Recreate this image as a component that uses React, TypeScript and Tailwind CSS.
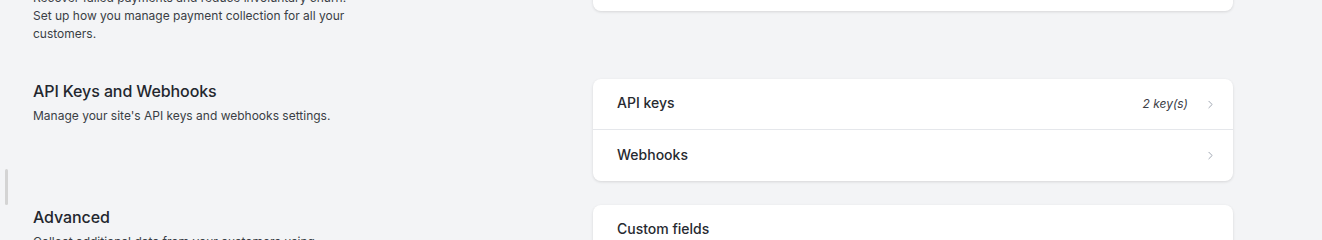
import { ChevronRight } from 'lucide-react'

type Row = { label: string; meta?: string; desc?: string }

type Section = {
  title: string
  lines: string[]
  rows: Row[]
}

const SECTIONS: Section[] = [
  {
    title: 'Payment recovery',
    lines: [
      'Recover failed payments and reduce involuntary churn.',
      'Set up how you manage payment collection for all your',
      'customers.',
    ],
    rows: [{ label: 'Dunning' }],
  },
  {
    title: 'API Keys and Webhooks',
    lines: ["Manage your site's API keys and webhooks settings."],
    rows: [{ label: 'API keys', meta: '2 key(s)' }, { label: 'Webhooks' }],
  },
  {
    title: 'Advanced',
    lines: ['Collect additional data from your customers using', 'custom fields.'],
    rows: [
      {
        label: 'Custom fields',
        desc: 'Collect additional information from customers at checkout and in the customer portal.',
      },
    ],
  },
]

function SettingsRow({ row }: { row: Row }) {
  if (row.desc) {
    return (
      <div className="flex items-start h-[100px] pl-6 pr-[16px] pt-[14px] border-t border-[#e5e7eb] first:border-t-0">
        <div className="flex-1">
          <div className="text-[14px] leading-5 font-medium text-[#272a30]">{row.label}</div>
          <div className="mt-1 text-[12px] leading-[18px] text-[#3a3e45]">{row.desc}</div>
        </div>
        <ChevronRight size={13} strokeWidth={1.75} className="self-center text-[#9ca3af]" />
      </div>
    )
  }
  return (
    <div className="flex items-center pl-6 pr-[16px] border-t border-[#e5e7eb] first:border-t-0 first:h-[50px] [&:not(:first-child)]:h-[52px]">
      <span className="flex-1 -mt-[3px] text-[14px] font-medium text-[#272a30]">{row.label}</span>
      {row.meta && <span className="text-[12px] italic text-[#3c4047] mr-[16px]">{row.meta}</span>}
      <ChevronRight size={13} strokeWidth={1.75} className="text-[#9ca3af]" />
    </div>
  )
}

export default function App() {
  return (
    <div
      className="relative h-[240px] overflow-hidden bg-[#f3f4f6]"
      style={{ fontFamily: 'Inter, "Noto Sans", sans-serif' }}
    >
      {/* drag handle on the left edge */}
      <div className="absolute left-[5px] top-[169px] w-[3px] h-[36px] rounded-full bg-[#d4d4d4]" />

      <div className="flex flex-col gap-6 pl-[33px] -mt-[39px]">
        {SECTIONS.map((s) => (
          <div key={s.title} className="flex items-start">
            <div className="w-[560px] pb-3">
              <h2 className="text-[16px] leading-6 font-medium tracking-[-0.1px] text-[#23272e]">{s.title}</h2>
              <div className="mt-1 max-w-[320px] text-[12px] leading-[18px] text-[#3a3e45]">
                {s.lines.map((l) => (
                  <div key={l}>{l}</div>
                ))}
              </div>
            </div>
            <div className="w-[640px] bg-white rounded-lg shadow-[0_1px_3px_rgba(0,0,0,0.12)]">
              {s.rows.map((r) => (
                <SettingsRow key={r.label} row={r} />
              ))}
            </div>
          </div>
        ))}
      </div>
    </div>
  )
}
